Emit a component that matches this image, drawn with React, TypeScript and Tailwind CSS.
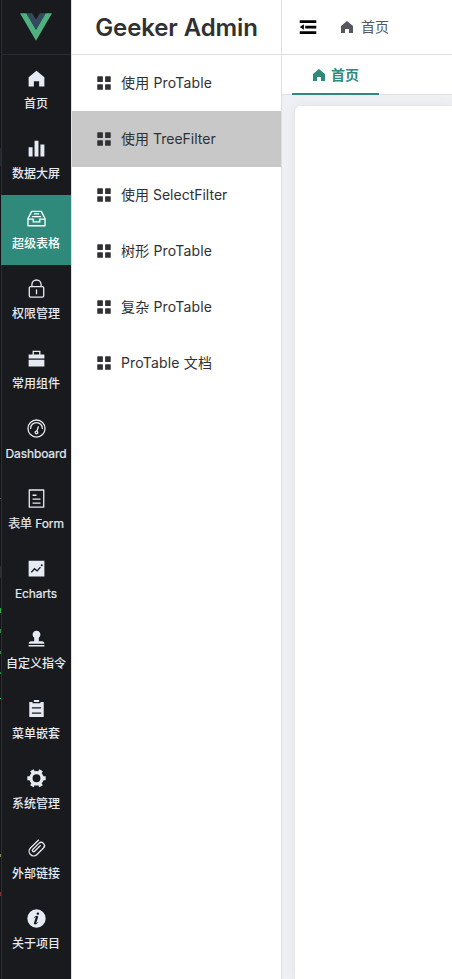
const icons = {
  home: "M512 128 128 447.936V896h255.936V640H640v256h255.936V447.936z",
  histogram: "M416 896V128h192v768H416zm-288 0V448h192v448H128zm576 0V320h192v576H704z",
  messageBox: "M288 384h448v64H288v-64zm96-128h256v64H384v-64zM131.456 512H384v128h256V512h252.544L721.856 192H302.144L131.456 512zM896 576H704v128H320V576H128v256h768V576zM275.776 128h472.448a32 32 0 0 1 28.608 17.664l179.84 359.552A32 32 0 0 1 960 519.552V864a32 32 0 0 1-32 32H96a32 32 0 0 1-32-32V519.552a32 32 0 0 1 3.392-14.336l179.776-359.552A32 32 0 0 1 275.776 128z",
  lock: "M224 448a32 32 0 0 0-32 32v384a32 32 0 0 0 32 32h576a32 32 0 0 0 32-32V480a32 32 0 0 0-32-32H224zm0-64h576a96 96 0 0 1 96 96v384a96 96 0 0 1-96 96H224a96 96 0 0 1-96-96V480a96 96 0 0 1 96-96zM512 544a32 32 0 0 1 32 32v192a32 32 0 1 1-64 0V576a32 32 0 0 1 32-32zm192-160v-64a192 192 0 1 0-384 0v64h384zM512 64a256 256 0 0 1 256 256v64H256v-64A256 256 0 0 1 512 64z",
  briefcase: "M320 320V128h384v192h192v192H128V320h192zM128 576h768v320H128V576zm256-256h256.064V192H384v128z",
  odometer: "M512 896a384 384 0 1 0 0-768 384 384 0 0 0 0 768zm0 64a448 448 0 1 1 0-896 448 448 0 0 1 0 896zM192 512a320 320 0 1 1 640 0 32 32 0 1 1-64 0 256 256 0 1 0-512 0 32 32 0 0 1-64 0zM570.432 627.84A96 96 0 1 1 509.568 608l60.992-187.776A32 32 0 1 1 631.424 440l-60.992 187.776zM502.08 734.464a32 32 0 1 0 19.84-60.928 32 32 0 0 0-19.84 60.928z",
  tickets: "M192 128v768h640V128H192zm-32-64h704a32 32 0 0 1 32 32v832a32 32 0 0 1-32 32H160a32 32 0 0 1-32-32V96a32 32 0 0 1 32-32zm160 448h384v64H320v-64zm0-192h192v64H320v-64zm0 384h384v64H320v-64z",
  trend: "M128 896V128h768v768H128zm291.712-327.296 128 102.4 180.16-201.792-47.744-42.624-139.84 156.608-128-102.4-180.16 201.792 47.744 42.624 139.84-156.608zM816 352a48 48 0 1 0-96 0 48 48 0 0 0 96 0z",
  stamp: "M624 475.968V640h144a128 128 0 0 1 128 128H128a128 128 0 0 1 128-128h144V475.968a192 192 0 1 1 224 0zM128 896v-64h768v64H128z",
  list: "M704 192h160v736H160V192h160v64h384v-64zM288 512h448v-64H288v64zm0 256h448v-64H288v64zm96-576V96h256v96H384z",
  tools: "M764.416 254.72a351.68 351.68 0 0 1 86.336 149.184H960v192.064H850.752a351.68 351.68 0 0 1-86.336 149.312l54.72 94.72-166.272 96-54.592-94.72a352.64 352.64 0 0 1-172.48 0L371.136 936l-166.272-96 54.72-94.72a351.68 351.68 0 0 1-86.336-149.312H64v-192h109.248a351.68 351.68 0 0 1 86.336-149.312L204.8 160l166.208-96h.192l54.656 94.592a352.64 352.64 0 0 1 172.48 0L652.8 64h.128L819.2 160l-54.72 94.72zM704 499.968a192 192 0 1 0-384 0 192 192 0 0 0 384 0z",
  paperclip: "M602.496 240.448A192 192 0 1 1 874.048 512l-316.8 316.8A256 256 0 0 1 195.2 466.752L602.496 59.456l45.248 45.248L240.448 512A192 192 0 0 0 512 783.552l316.8-316.8a128 128 0 1 0-181.056-181.056L353.6 579.904a32 32 0 1 0 45.248 45.248l294.144-294.144 45.312 45.248L444.096 670.4a96 96 0 1 1-135.744-135.744l294.144-294.208z",
  info: "M512 64a448 448 0 1 1 0 896.064A448 448 0 0 1 512 64zm67.2 275.072c33.28 0 60.288-23.104 60.288-57.344s-27.072-57.344-60.288-57.344c-33.28 0-60.16 23.104-60.16 57.344s26.88 57.344 60.16 57.344zM590.912 699.2c0-6.848 2.368-24.64 1.024-34.752l-52.608 60.544c-10.88 11.456-24.512 19.392-30.912 17.28a12.992 12.992 0 0 1-8.256-14.72l87.68-276.992c7.168-35.136-12.544-67.2-54.336-71.296-44.096 0-108.992 44.736-148.48 101.504 0 6.784-1.28 23.68.064 33.792l52.544-60.608c10.88-11.328 23.552-19.328 29.952-17.152a12.8 12.8 0 0 1 7.808 16.128L388.48 728.576c-10.048 32.256 8.96 63.872 55.04 71.04 67.84 0 107.904-43.648 147.456-100.416z",
  menu: "M160 448a32 32 0 0 1-32-32V160.064a32 32 0 0 1 32-32h256a32 32 0 0 1 32 32V416a32 32 0 0 1-32 32H160zm448 0a32 32 0 0 1-32-32V160.064a32 32 0 0 1 32-32h255.936a32 32 0 0 1 32 32V416a32 32 0 0 1-32 32H608zM160 896a32 32 0 0 1-32-32V608a32 32 0 0 1 32-32h256a32 32 0 0 1 32 32v256a32 32 0 0 1-32 32H160zm448 0a32 32 0 0 1-32-32V608a32 32 0 0 1 32-32h255.936a32 32 0 0 1 32 32v256a32 32 0 0 1-32 32H608z",
  fold: "M896 192H128v128h768V192zm0 256H384v128h512V448zm0 256H128v128h768V704zM320 384 128 512l192 128V384z",
};

type IconName = keyof typeof icons;

function Icon({ name, className }: { name: IconName; className: string }) {
  return (
    <svg viewBox="0 0 1024 1024" fill="currentColor" className={`shrink-0 ${className}`}>
      <path d={icons[name]} />
    </svg>
  );
}

const modules: { icon: IconName; label: string }[] = [
  { icon: "home", label: "首页" },
  { icon: "histogram", label: "数据大屏" },
  { icon: "messageBox", label: "超级表格" },
  { icon: "lock", label: "权限管理" },
  { icon: "briefcase", label: "常用组件" },
  { icon: "odometer", label: "Dashboard" },
  { icon: "tickets", label: "表单 Form" },
  { icon: "trend", label: "Echarts" },
  { icon: "stamp", label: "自定义指令" },
  { icon: "list", label: "菜单嵌套" },
  { icon: "tools", label: "系统管理" },
  { icon: "paperclip", label: "外部链接" },
  { icon: "info", label: "关于项目" },
];

const pages = ["使用 ProTable", "使用 TreeFilter", "使用 SelectFilter", "树形 ProTable", "复杂 ProTable", "ProTable 文档"];

// Sliver of the dark window behind the page, visible along the left edge.
function WindowEdge() {
  return (
    <div className="flex w-px shrink-0 flex-col bg-[#121317]">
      <i className="mt-[148px] h-[18px] bg-[#25262f]" />
      <i className="mt-[332px] h-px bg-[#55575a]" />
      <i className="mt-[67px] h-3 bg-[#2d2e36]" />
      <i className="mt-[30px] h-[5px] bg-[#2fa84a]" />
      <i className="mt-4 h-[4px] bg-[#2a8a40]" />
      <i className="mt-[18px] h-[3px] bg-[#2a8a40]" />
      <i className="mt-[18px] h-[2px] bg-[#2a8a40]" />
      <i className="mt-6 h-px bg-[#2fc04a]" />
      <i className="mt-[155px] h-[3px] bg-[#6f8f45]" />
      <i className="mt-[35px] h-[4px] bg-[#7a3438]" />
    </div>
  );
}

function Rail() {
  return (
    <aside className="flex w-[71px] shrink-0 flex-col border-r border-[#dcdfe6] bg-[#191a1e] text-[#e5eaf3]">
      <div className="flex h-[55px] items-start justify-center border-b border-l border-b-[#282a35] border-l-[#2e2f33] pt-[13px] pr-px">
        <svg viewBox="0 0 256 221" className="h-[28px] w-8">
          <path fill="#4db180" d="M0 0h51.2L128 132.48 204.8 0H256L128 220.8z" />
          <path fill="#35495e" d="M51.2 0h46.08L128 51.2 158.72 0h46.08L128 132.48z" />
        </svg>
      </div>
      {modules.map(({ icon, label }) => (
        <div
          key={label}
          className={`flex h-[70px] shrink-0 flex-col items-center border-l pt-[13px] pr-px ${icon === "messageBox" ? "border-[#2f8a7c] bg-[#2f8a7c] text-white" : "border-[#2e2f33]"}`}
        >
          <Icon name={icon} className="ml-px size-[21px]" />
          <span
            className={`mt-[7px] text-xs leading-4 whitespace-nowrap ${/[a-z]/.test(label) ? "font-normal tracking-[-0.01em] [-webkit-text-stroke:0.2px]" : "font-medium"}`}
          >
            {label}
          </span>
        </div>
      ))}
      <div className="flex-1 border-l border-[#2e2f33]" />
    </aside>
  );
}

function SubMenu() {
  return (
    <nav className="flex w-[210px] shrink-0 flex-col border-r border-[#dcdfe6] bg-white text-[#303133]">
      <h1 className="flex h-[55px] items-center justify-center border-b border-[#dcdfe6] pt-0.5 text-2xl font-semibold tracking-[-0.005em] whitespace-nowrap">
        Geeker Admin
      </h1>
      {pages.map((page) => (
        <div key={page} className={`flex h-14 items-center gap-2 pl-[23px] ${page.includes("Tree") ? "bg-[#c8c8c8]" : ""}`}>
          <Icon name="menu" className="size-[18px]" />
          <span className={`text-sm whitespace-nowrap ${page.includes("ProTable") ? "tracking-[0.012em]" : ""}`}>{page}</span>
        </div>
      ))}
    </nav>
  );
}

export default function App() {
  return (
    <div className="flex h-[979px] w-full overflow-hidden bg-white font-['Inter','Noto_Sans_CJK_SC',sans-serif]">
      <WindowEdge />
      <Rail />
      <SubMenu />
      <main className="flex min-w-0 flex-1 flex-col bg-[#eff0f3]">
        <header className="flex h-[55px] shrink-0 items-center border-b border-[#dcdfe6] bg-white pl-[15px]">
          <Icon name="fold" className="size-[22px] text-black" />
          <div className="ml-5 flex items-center gap-1.5 text-sm text-[#55575c]">
            <Icon name="home" className="size-4" />
            <span>首页</span>
          </div>
        </header>
        <div className="flex h-10 shrink-0 border-b border-[#dfe2e8] bg-white pl-[10px]">
          <div className="-mb-px flex w-[87px] items-center gap-1 border-b-2 border-[#2f8a7c] pt-0.5 pl-[19px] text-sm font-bold text-[#2f8a7c]">
            <Icon name="home" className="size-4" />
            <span>首页</span>
          </div>
        </div>
        <div className="mt-[10px] ml-3 flex-1 rounded-tl-md border-t border-l border-[#e4e7ed] bg-white shadow-[0_0_12px_rgba(0,0,0,0.05)]" />
      </main>
    </div>
  );
}
